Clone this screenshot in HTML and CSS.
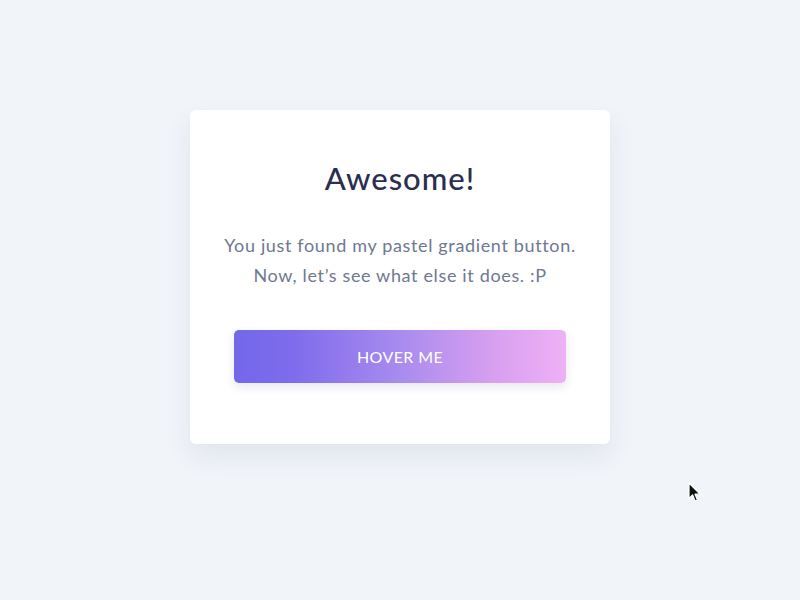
FILE: index.html
```html
<!DOCTYPE html>
<html lang="en">
<head>
<meta charset="utf-8">
<title>Pastel gradient button</title>
<link rel="stylesheet" href="styles.css">
</head>
<body>
<main class="stage">
  <section class="card">
    <h1 class="card-title">Awesome!</h1>
    <p class="card-text">You just found my pastel gradient button.<br>Now, let’s see what else it does. :P</p>
    <button class="btn" type="button">HOVER ME</button>
  </section>
</main>
<svg class="cursor" width="14" height="21" viewBox="0 0 14 21" aria-hidden="true">
  <path d="M1 1 L1 16.5 L4.6 13 L7.1 19 L9.5 18 L7 12.2 L12 12.2 Z" fill="#111" stroke="#fff" stroke-width="1.2" stroke-linejoin="round"/>
</svg>
</body>
</html>
```

FILE: styles.css
```css
html, body {
  margin: 0;
  height: 100%;
}
body {
  background: #f1f4f9;
  font-family: "Lato", "Open Sans", sans-serif;
  overflow: hidden;
}
.stage {
  display: flex;
  justify-content: center;
  padding-top: 110px;
}
.card {
  width: 420px;
  box-sizing: border-box;
  background: #ffffff;
  border-radius: 6px;
  padding: 50px 30px 61px;
  text-align: center;
  box-shadow: 0 12px 28px rgba(40, 50, 90, 0.08);
}
.card-title {
  margin: 0;
  font-size: 31px;
  line-height: 36px;
  font-weight: 500;
  color: #2b2d52;
  letter-spacing: 1px;
}
.card-text {
  margin: 34px 0 40px;
  font-size: 18px;
  line-height: 30px;
  color: #6f7891;
  font-weight: 400;
  letter-spacing: 0.65px;
}
.btn {
  display: block;
  width: 332px;
  height: 53px;
  margin: 0 auto;
  border: 0;
  border-radius: 5px;
  background: linear-gradient(90deg, #7367ea 0%, #7f6cec 18%, #a88bee 50%, #d79ff0 78%, #efb1f5 100%);
  color: #ffffff;
  font-family: "Lato", "Open Sans", sans-serif;
  font-size: 16px;
  letter-spacing: 0.4px;
  box-shadow: 0 4px 10px rgba(60, 60, 120, 0.12);
  cursor: pointer;
}
.cursor {
  position: absolute;
  left: 688px;
  top: 482px;
}
```
